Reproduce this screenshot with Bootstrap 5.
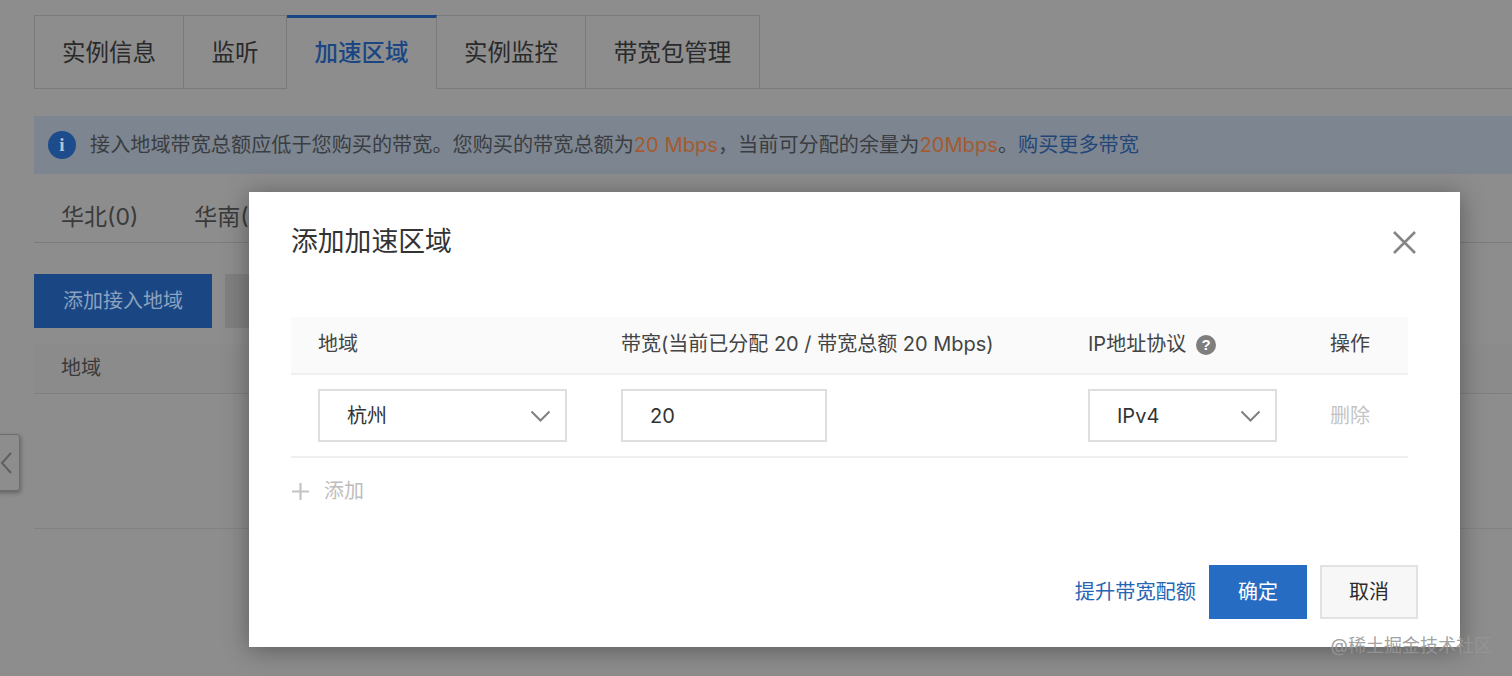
<!DOCTYPE html>
<html lang="zh-CN">
<head>
<meta charset="utf-8">
<title>添加加速区域</title>
<link href="https://cdn.jsdelivr.net/npm/bootstrap@5.3.0/dist/css/bootstrap.min.css" rel="stylesheet">
<style>
html,body{height:676px;overflow:hidden}
body{background:#8d8d8d;font-family:Inter,"Noto Sans CJK SC",sans-serif;color:#2b2b2b}
.pg{position:relative;height:676px;padding:15px 0 0 34px;overflow:hidden}
.tabbar{display:flex;height:74px;border-bottom:1px solid #7a7a7a}
.tabx{display:flex;align-items:center;justify-content:center;font-size:23.5px;color:#2a2a2a;border:1px solid #7a7a7a;border-left:0;height:74px;padding-top:2px}
.tabx:first-child{border-left:1px solid #7a7a7a}
.tabx.on{color:#1a4684;font-weight:500;border-top:3px solid #1a4684;border-bottom-color:#8d8d8d;padding-top:0;position:relative}
.notice{margin-top:27px;height:58px;background:#7d8590;font-size:20.15px;color:#3a3d41;padding-left:14px;gap:14px}
.infoi{width:28px;height:28px;border-radius:50%;background:#1d4c8c;color:#b9c4d4;font:700 19px/28px "Liberation Serif",serif;text-align:center;flex:none}
.orng{color:#a55a30}
.lnkb{color:#234679;text-decoration:none}
.subtabs{margin-top:24px;height:45px;border-bottom:1px solid #7c7c7c;font-size:23px;color:#3a3a3a;gap:56px;padding-left:27px;padding-bottom:8px}
.actbar{margin-top:31px;gap:13px}
.bgbtn{height:54px;width:178px;background:#1a4783;color:#8ca2c0;font-size:20px;border-radius:0;border:0;padding:0}
.bggrey{width:120px;background:#808080}
.bghead{margin-top:17px;height:49px;border-bottom:1px solid #7f7f7f;background:#8b8b8b;font-size:20px;padding-left:27px;color:#3a3a3a;padding-bottom:3px}
.bgrow{height:135px;border-bottom:1px solid #828282}
.handle{position:absolute;left:-4px;top:434px;width:24px;height:57px;background:#8d8d8d;border:1px solid #6d6d6d;border-radius:3px;box-shadow:1px 2px 4px rgba(0,0,0,.3);padding-left:3px}
.dlgwrap{position:absolute;left:249px;top:192px;width:1211px;height:455px}
.dlg{height:100%;border:0;border-radius:0;box-shadow:0 3px 24px rgba(0,0,0,.36);background:#fff}
.dlg .modal-header{border:0;padding:30px 43px 0 42px;height:84px;align-items:flex-start}
.dlg .modal-title{font-size:26.8px;line-height:38px;color:#333;font-weight:400}
.xbtn{background:none;border:0;padding:0;width:25px;height:25px;margin-top:8px;line-height:0}
.dlg .modal-body{padding:41px 52px 0 42px;flex:none}
.rgn{width:1117px;table-layout:fixed;margin:0;font-size:20px;color:#444}
.rgn th{background:#fafafa;height:57px;font-weight:400;border-bottom:2px solid #efefef;padding:0 0 3px 27px;vertical-align:middle;color:#444;box-shadow:none}
.rgn td{height:83px;padding:0 0 0 27px;vertical-align:middle;border-bottom:2px solid #efefef;box-shadow:none}
.rgn th.c4,.rgn td.c4{text-align:right;padding:0 38px 3px 0}
.rgn td.c4{padding-bottom:0}
.qm{display:inline-block;width:20px;height:20px;border-radius:50%;background:#7e7e7e;color:#fff;font:700 15px/20px "Liberation Sans",sans-serif;text-align:center;margin-left:10px;vertical-align:1px}
.fld{height:53px;border:2px solid #dedede;border-radius:0;font-size:20px;color:#333;padding:0 40px 0 27px;box-shadow:none;background-size:21px 12px;background-position:right 14px center;background-image:url("data:image/svg+xml,%3Csvg xmlns='http://www.w3.org/2000/svg' viewBox='0 0 21 12'%3E%3Cpath d='M1.5 1.5l9 9 9-9' fill='none' stroke='%23808080' stroke-width='2'/%3E%3C/svg%3E")}
.w1{width:249px}.w2{width:206px;background-image:none;padding-right:10px}.w3{width:189px}
.delx{color:#c4c4c4}
.addrow{gap:14px;color:#bdbdbd;font-size:20px;height:66px}
.dlg .modal-footer{border:0;position:absolute;right:42px;bottom:28px;padding:0;gap:13px;flex-wrap:nowrap}
.dlg .modal-footer>*{margin:0}
.lnkup{color:#2566b5;font-size:20.2px;text-decoration:none}
.okb,.nob{width:98px;height:54px;border-radius:0;font-size:20px;padding:0}
.okb{background:#266cc2;border:1px solid #266cc2;color:#fff}
.nob{background:#f7f7f7;border:2px solid #e2e2e2;color:#2b2b2b}
.wmark{position:absolute;right:20px;top:633px;font-size:18px;line-height:26px;color:rgba(150,150,150,.9);white-space:nowrap}
</style>
</head>
<body>
<div class="pg">
  <div class="tabbar">
    <div class="tabx" style="width:150px">实例信息</div>
    <div class="tabx" style="width:103px">监听</div>
    <div class="tabx on" style="width:150px">加速区域</div>
    <div class="tabx" style="width:149px">实例监控</div>
    <div class="tabx" style="width:174px">带宽包管理</div>
  </div>
  <div class="notice d-flex align-items-center">
    <span class="infoi">i</span>
    <span>接入地域带宽总额应低于您购买的带宽。您购买的带宽总额为<span class="orng">20 Mbps</span>，当前可分配的余量为<span class="orng">20Mbps</span>。<a class="lnkb" href="#">购买更多带宽</a></span>
  </div>
  <div class="subtabs d-flex align-items-end">
    <span>华北(0)</span><span>华南(0)</span>
  </div>
  <div class="actbar d-flex">
    <button class="btn bgbtn" type="button">添加接入地域</button>
    <button class="btn bgbtn bggrey" type="button"></button>
  </div>
  <div class="bghead d-flex align-items-center">地域</div>
  <div class="bgrow"></div>

  <div class="handle d-flex align-items-center">
    <svg width="13" height="24" viewBox="0 0 13 24"><path d="M11 2L2 12l9 10" fill="none" stroke="#5f5f5f" stroke-width="2"/></svg>
  </div>

  <div class="dlgwrap">
    <div class="modal-content dlg">
      <div class="modal-header">
        <h5 class="modal-title">添加加速区域</h5>
        <button class="xbtn ms-auto" type="button" aria-label="关闭">
          <svg width="25" height="25" viewBox="0 0 25 25"><path d="M2 2l21 21M23 2L2 23" fill="none" stroke="#858585" stroke-width="2.6"/></svg>
        </button>
      </div>
      <div class="modal-body">
        <table class="table rgn">
          <colgroup><col style="width:303px"><col style="width:467px"><col style="width:242px"><col style="width:105px"></colgroup>
          <thead>
            <tr>
              <th>地域</th>
              <th>带宽(当前已分配 20 / 带宽总额 20 Mbps)</th>
              <th>IP地址协议<span class="qm">?</span></th>
              <th class="c4">操作</th>
            </tr>
          </thead>
          <tbody>
            <tr>
              <td><select class="form-select fld w1"><option>杭州</option></select></td>
              <td><input class="form-control fld w2" value="20"></td>
              <td><select class="form-select fld w3"><option>IPv4</option></select></td>
              <td class="c4 delx">删除</td>
            </tr>
          </tbody>
        </table>
        <div class="addrow d-flex align-items-center">
          <svg width="19" height="19" viewBox="0 0 19 19"><path d="M9.5 1v17M1 9.5h17" fill="none" stroke="#c4c4c4" stroke-width="2.2"/></svg>
          <span>添加</span>
        </div>
      </div>
      <div class="modal-footer d-flex align-items-center">
        <a class="lnkup" href="#">提升带宽配额</a>
        <button class="btn okb" type="button">确定</button>
        <button class="btn nob" type="button">取消</button>
      </div>
    </div>
  </div>
  <div class="wmark">@稀土掘金技术社区</div>
</div>
</body>
</html>
